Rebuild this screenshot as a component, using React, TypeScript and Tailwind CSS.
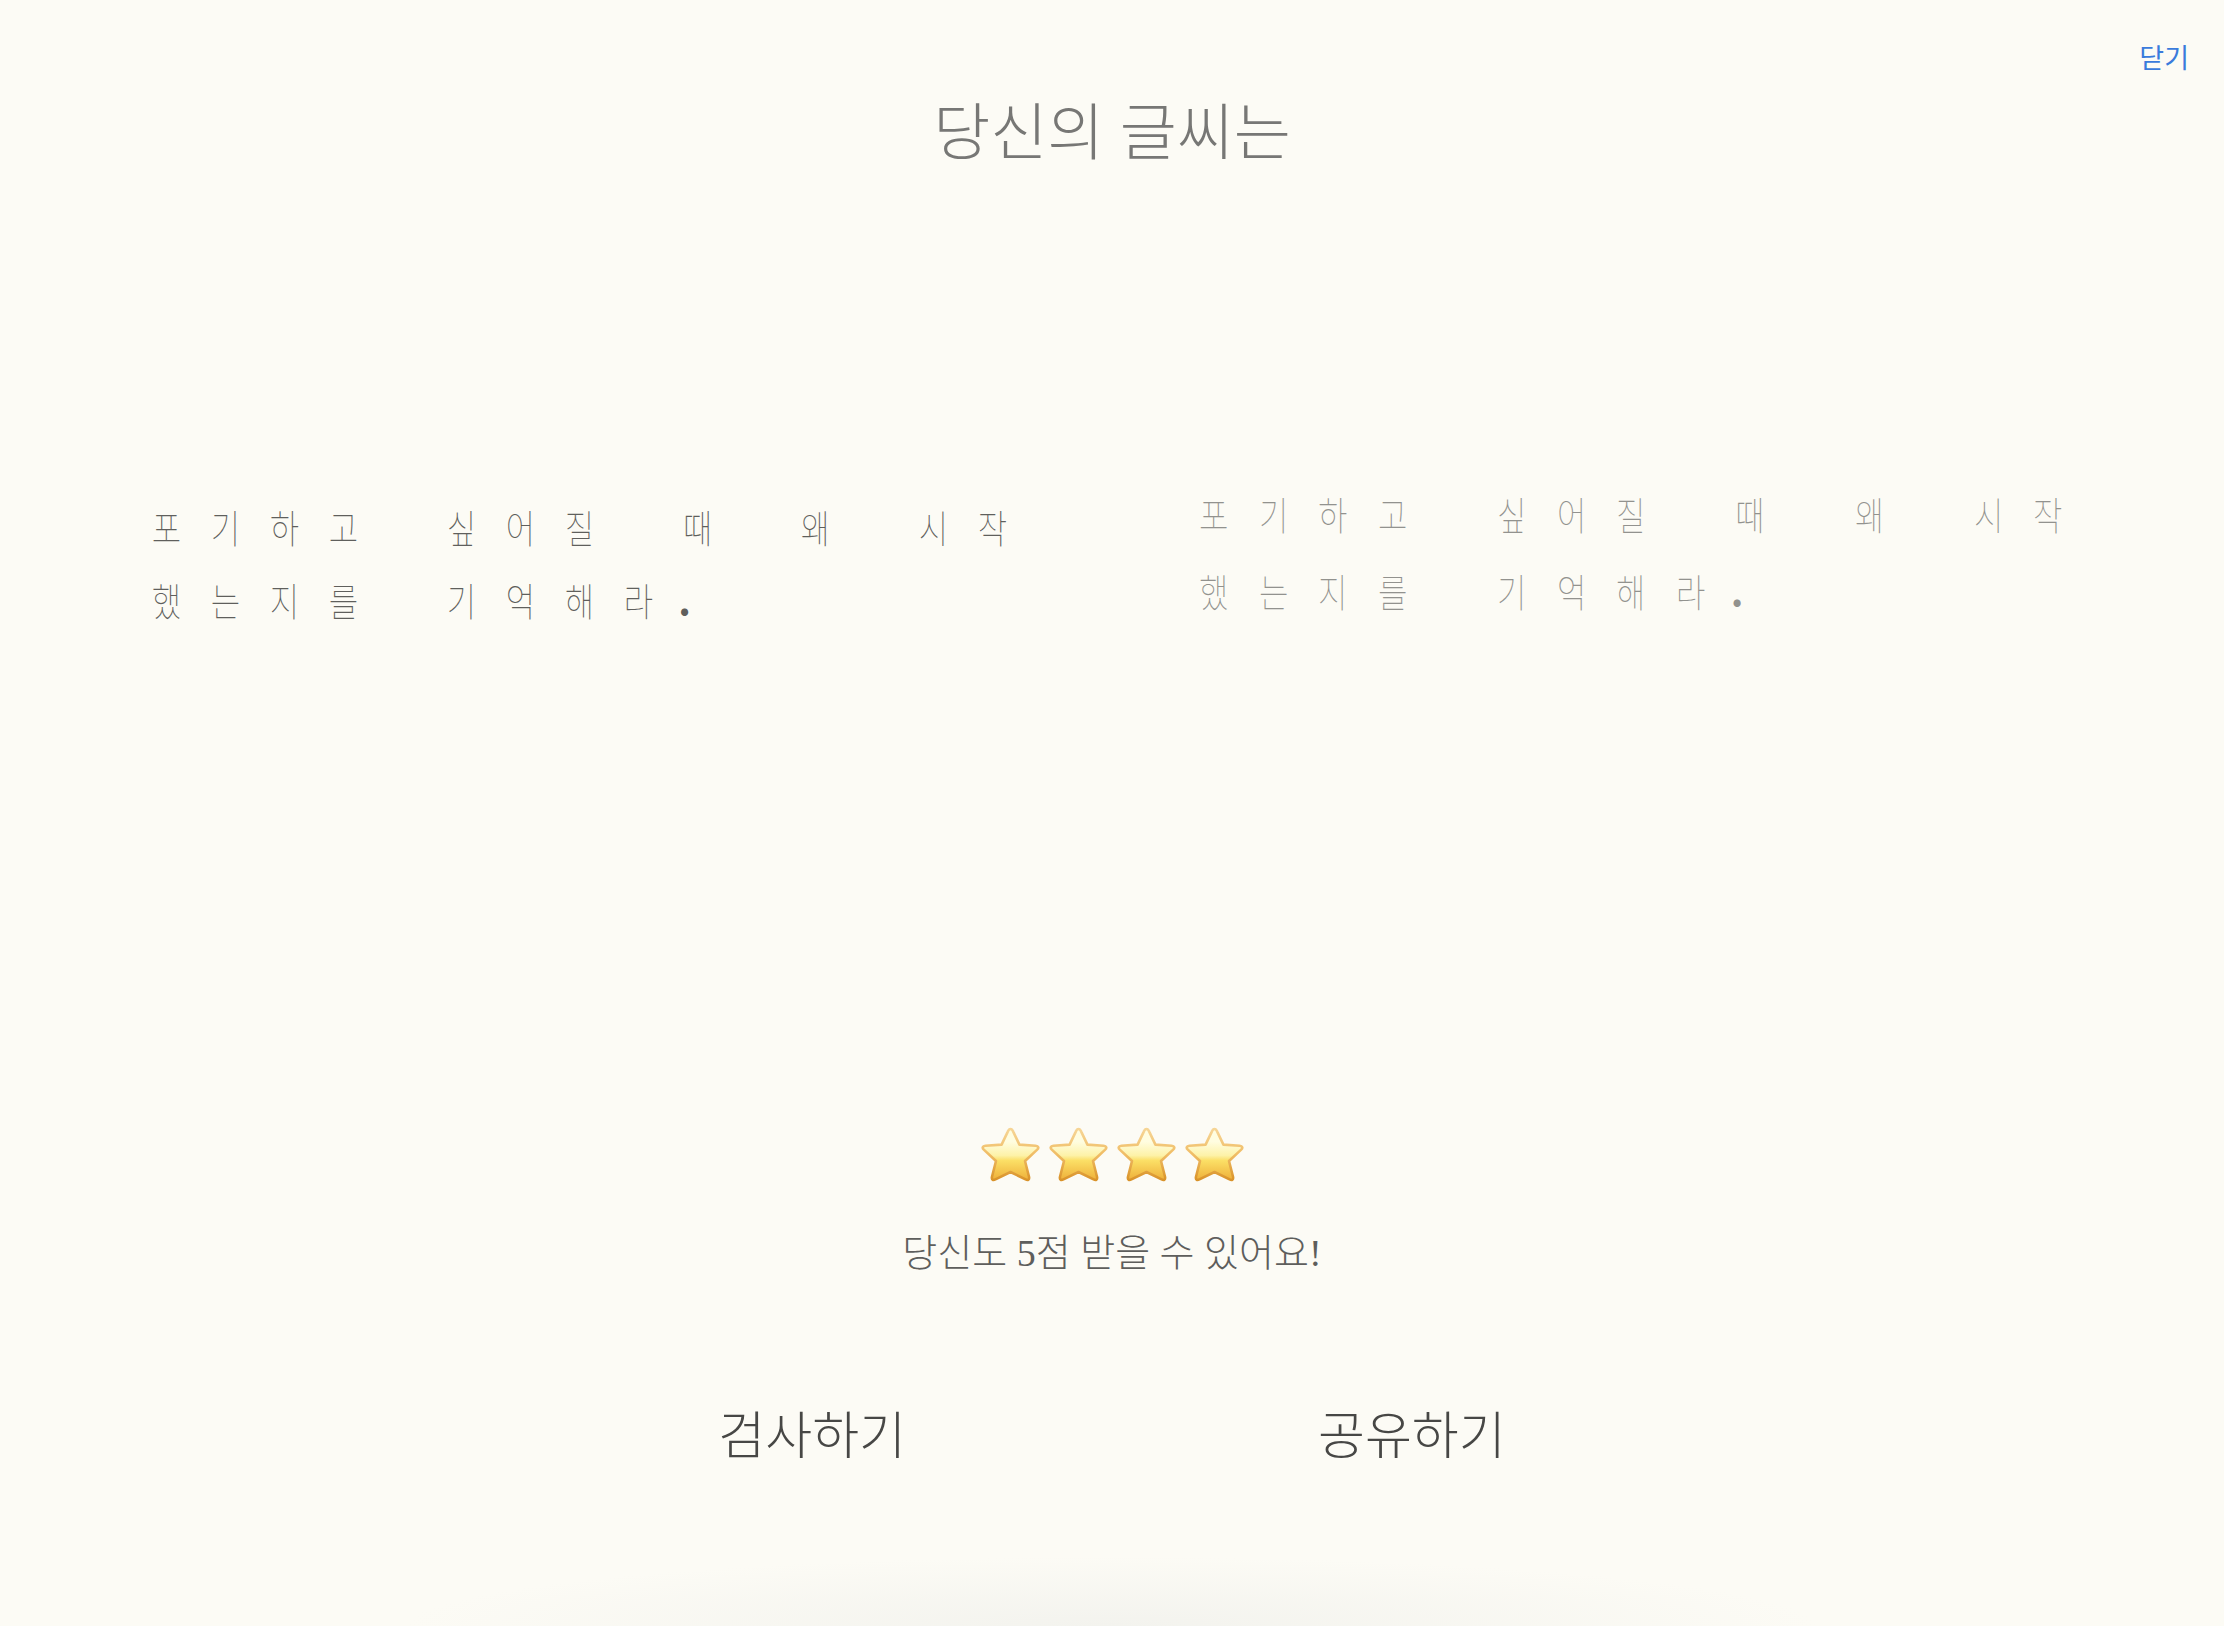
import { useId } from "react";

const serif = "[font-family:'Liberation_Serif','Noto_Sans_CJK_KR',serif]";
const sentence = "포기하고 싶어질 때 왜 시작했는지를 기억해라.";

function Star() {
  const id = useId();
  return (
    <svg viewBox="0 0 59 55" className="w-[59px] h-[55px]">
      <defs>
        <linearGradient id={id + "f"} x1="0" y1="0" x2="0" y2="1">
          <stop offset="0.25" stopColor="#fffde0" />
          <stop offset="0.52" stopColor="#fdf2a8" />
          <stop offset="0.62" stopColor="#fbdf66" />
          <stop offset="1" stopColor="#eeb03a" />
        </linearGradient>
        <linearGradient id={id + "s"} x1="0" y1="0" x2="0" y2="1">
          <stop offset="0" stopColor="#f6d596" />
          <stop offset="0.5" stopColor="#f0bd66" />
          <stop offset="1" stopColor="#d9932a" />
        </linearGradient>
      </defs>
      <path
        d="M29.5 2 C30.8 2 31.6 3.2 32.2 4.6 L38.4 17.6 L54.6 18.8 C57.6 19.1 58 21 56.2 22.6 L44 34 L48 49.8 C48.6 52.6 47 53.6 44.6 52.4 L29.5 45 L14.4 52.4 C12 53.6 10.4 52.6 11 49.8 L15 34 L2.8 22.6 C1 21 1.4 19.1 4.4 18.8 L20.6 17.6 L26.8 4.6 C27.4 3.2 28.2 2 29.5 2 Z"
        fill={`url(#${id}f)`}
        stroke={`url(#${id}s)`}
        strokeWidth="2.6"
        strokeLinejoin="round"
      />
    </svg>
  );
}

function Handwriting({ className }: { className: string }) {
  return (
    <div className={className}>
      {Array.from(sentence).map((ch, i) => (
        <span
          key={i}
          className={
            ch === "."
              ? "inline-block text-center font-bold -translate-x-[13px]"
              : "inline-block text-center scale-x-[0.82]"
          }
        >
          {ch === " " ? "\u00a0" : ch}
        </span>
      ))}
    </div>
  );
}

export default function App() {
  return (
    <div className="relative h-[1626px] overflow-hidden bg-[#fcfbf5] flex flex-col items-center">
      <button className="absolute top-[38px] right-[35px] text-[27px] leading-[38px] text-[#3a7bdc] [font-family:'Noto_Sans_CJK_KR',sans-serif]">
        닫기
      </button>

      <h1 className={`${serif} mt-[95px] text-[62px] leading-[78px] font-light text-[#777775]`}>
        당신의 글씨는
      </h1>

      <div className="mt-[306px] w-full flex items-start pl-[137px] [font-family:'Noto_Sans_CJK_KR',sans-serif] font-thin">
        <Handwriting className="mt-[11px] grid grid-cols-[repeat(15,59px)] auto-rows-[73px] text-[39px] leading-[73px] text-[#5f5f5c]" />
        <Handwriting className="ml-[162px] mt-[-4px] grid grid-cols-[repeat(15,59.6px)] auto-rows-[77px] text-[39px] leading-[77px] text-[#92928e]" />
      </div>

      <div className="mt-[491px] flex gap-[9px]">
        <Star />
        <Star />
        <Star />
        <Star />
      </div>

      <p className={`${serif} mt-[47px] text-[38px] leading-[48px] font-light text-[#5e5e5c]`}>
        당신도 5점 받을 수 있어요!
      </p>

      <div className="mt-[126px] flex gap-[412px]">
        <button className={`${serif} text-[51px] leading-[68px] font-light text-[#474745]`}>검사하기</button>
        <button className={`${serif} text-[51px] leading-[68px] font-light text-[#474745]`}>공유하기</button>
      </div>

      <div className="absolute bottom-0 left-[400px] right-[400px] h-[70px] bg-[radial-gradient(ellipse_at_bottom,#f3f3ee_0%,#fcfbf500_70%)]" />
    </div>
  );
}
